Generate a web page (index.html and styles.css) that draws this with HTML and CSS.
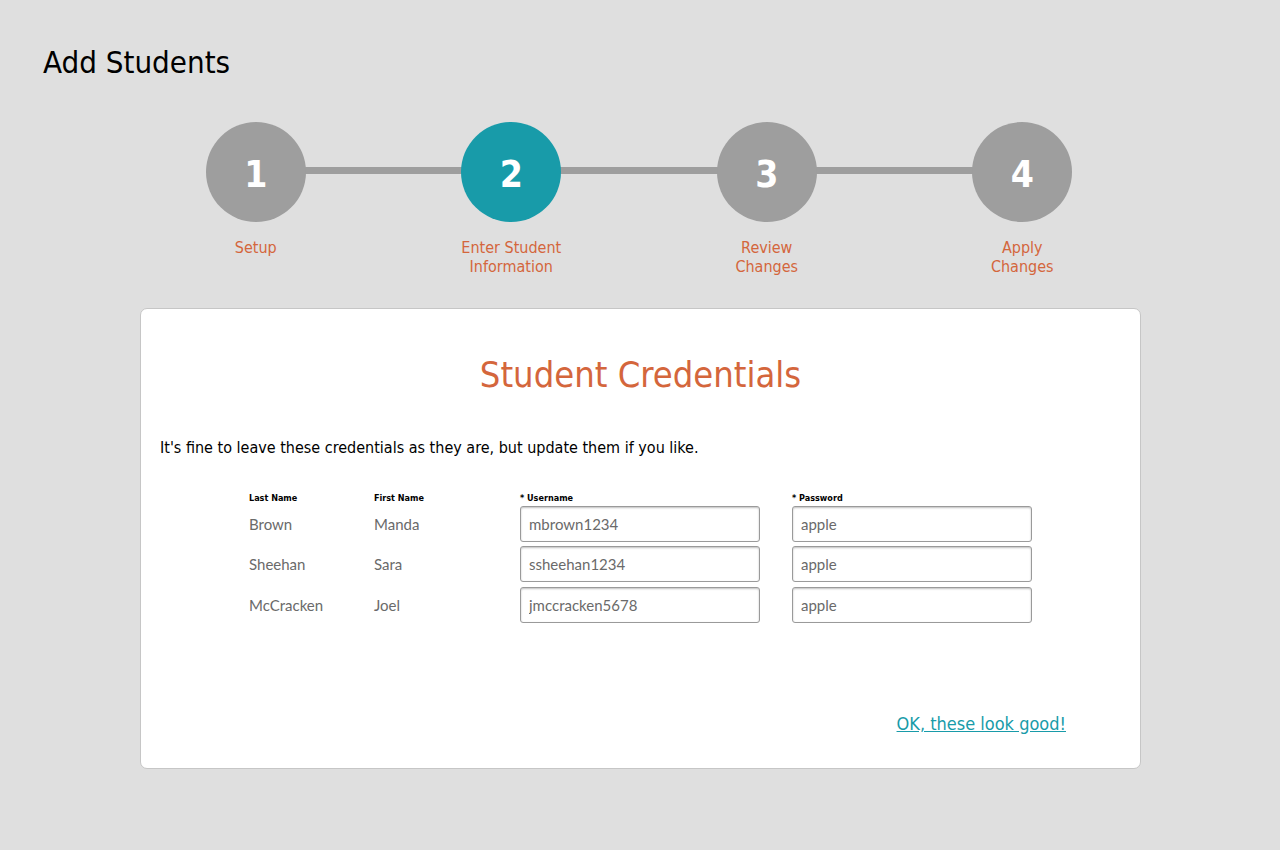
FILE: index.html
```html
<!DOCTYPE html>
<html>
<head>
<meta charset="utf-8">
<link rel="stylesheet" href="styles.css">
</head>
<body>
<div class="page">
  <h1 class="page-title">Add Students</h1>
  <div class="stepper">
    <div class="step">
      <div class="circle">1</div>
      <div class="step-label">Setup</div>
    </div>
    <div class="step">
      <div class="circle active">2</div>
      <div class="step-label">Enter Student<br>Information</div>
    </div>
    <div class="step">
      <div class="circle">3</div>
      <div class="step-label">Review<br>Changes</div>
    </div>
    <div class="step">
      <div class="circle">4</div>
      <div class="step-label">Apply<br>Changes</div>
    </div>
  </div>
  <div class="card">
    <h2 class="card-title">Student Credentials</h2>
    <p class="intro">It's fine to leave these credentials as they are, but update them if you like.</p>
    <div class="creds">
      <div class="hdr">Last Name</div>
      <div class="hdr">First Name</div>
      <div class="hdr">* Username</div>
      <div class="hdr">* Password</div>

      <div class="name">Brown</div>
      <div class="name">Manda</div>
      <input class="field" value="mbrown1234">
      <input class="field" value="apple">

      <div class="name">Sheehan</div>
      <div class="name">Sara</div>
      <input class="field" value="ssheehan1234">
      <input class="field" value="apple">

      <div class="name">McCracken</div>
      <div class="name">Joel</div>
      <input class="field" value="jmccracken5678">
      <input class="field" value="apple">
    </div>
    <div class="actions">
      <a class="ok-link" href="#">OK, these look good!</a>
    </div>
  </div>
</div>
</body>
</html>
```

FILE: styles.css
```css
html, body {
  margin: 0;
  padding: 0;
  background: #dfdfdf;
}
body {
  font-family: "DejaVu Sans Condensed", "DejaVu Sans", sans-serif;
  color: #000;
}
.page {
  width: 1280px;
  height: 850px;
  box-sizing: border-box;
  padding: 42px 0 0 0;
}
.page-title {
  margin: 0 0 0 43px;
  font-size: 31px;
  font-weight: normal;
  line-height: 40px;
}
.stepper {
  position: relative;
  display: grid;
  grid-template-columns: repeat(4, 255.5px);
  margin: 40px 0 0 128px;
  width: 1022px;
}
.stepper::before {
  content: "";
  position: absolute;
  left: 128px;
  right: 128px;
  top: 45px;
  height: 7px;
  background: #9e9e9e;
}
.step {
  display: flex;
  flex-direction: column;
  align-items: center;
  position: relative;
}
.circle {
  width: 100px;
  height: 100px;
  box-sizing: border-box;
  padding-top: 5px;
  border-radius: 50%;
  background: #9e9e9e;
  color: #fff;
  font-size: 37px;
  font-weight: bold;
  display: flex;
  align-items: center;
  justify-content: center;
}
.circle.active {
  background: #189ba9;
}
.step-label {
  margin-top: 16px;
  color: #d4663c;
  font-size: 16px;
  line-height: 19px;
  text-align: center;
}
.card {
  margin: 32px 0 0 140px;
  width: 1001px;
  height: 461px;
  box-sizing: border-box;
  background: #fff;
  border: 1px solid #c6c6c6;
  border-radius: 7px;
  padding: 43px 19px 0 19px;
}
.card-title {
  margin: 0;
  text-align: center;
  color: #d4663c;
  font-size: 36px;
  font-weight: normal;
  line-height: 46px;
}
.intro {
  margin: 40px 0 0 0;
  font-size: 16px;
  line-height: 20px;
}
.creds {
  display: grid;
  grid-template-columns: 125px 146px 240px 272px;
  row-gap: 4.5px;
  width: 783px;
  margin: 35px auto 0 auto;
}
.creds > :nth-child(4n) {
  margin-left: 32px;
}
.hdr {
  font-size: 9px;
  font-weight: bold;
  line-height: 11px;
  margin-bottom: -3px;
}
.name {
  font-family: Lato, "Open Sans", sans-serif;
  color: #6a6a6a;
  font-size: 15px;
  line-height: 36px;
}
.field {
  box-sizing: border-box;
  width: 240px;
  height: 36px;
  margin: 0;
  border: 1px solid #9a9a9a;
  border-radius: 3px;
  box-shadow: inset 0 1px 2px rgba(0,0,0,0.25);
  padding: 0 8px;
  font-family: Lato, "Open Sans", sans-serif;
  font-size: 15px;
  color: #6a6a6a;
  background: #fff;
  outline: none;
}
.actions {
  display: flex;
  justify-content: flex-end;
  margin-top: 90px;
  padding-right: 55px;
}
.ok-link {
  color: #189ba9;
  font-size: 18px;
  text-decoration: underline;
}
```
